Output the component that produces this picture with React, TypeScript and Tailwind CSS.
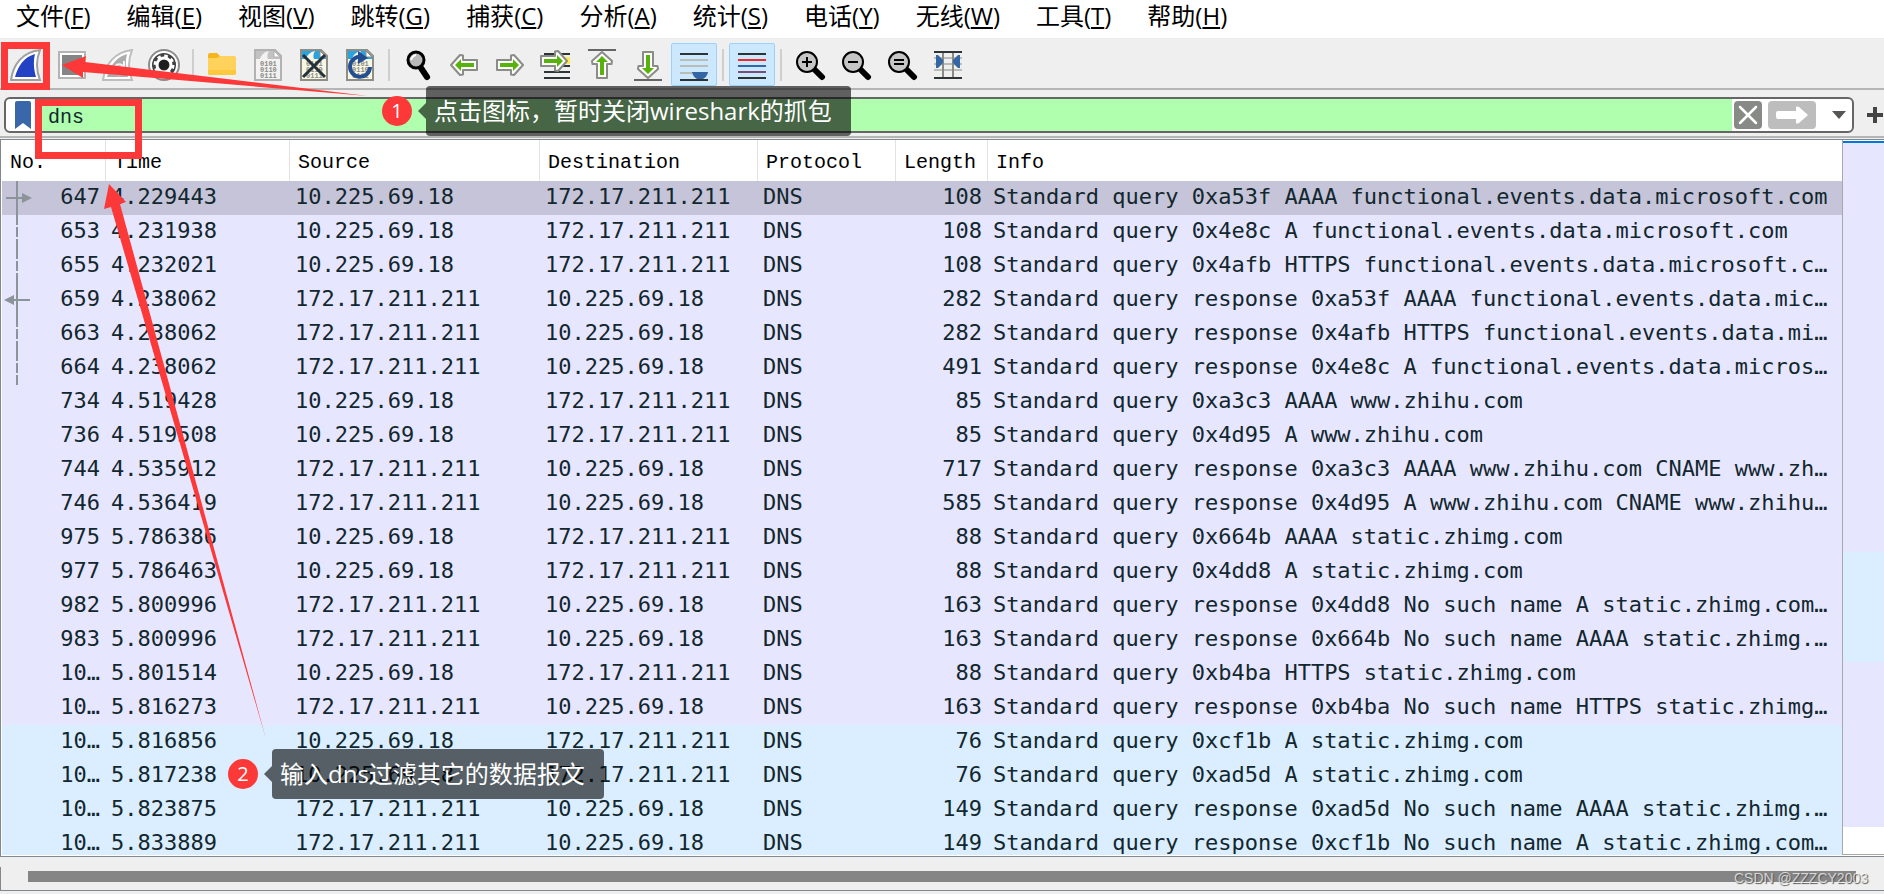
import React, { useState } from 'react';
import clsx from 'clsx';

interface Packet {
    no: string;
    time: string;
    out: boolean;
    length: number;
    info: string;
}

type Trace = 'request' | 'response' | 'dashed';

const CLIENT = '10.225.69.18';
const SERVER = '172.17.211.211';

const menus = [
    ['文件', 'F'], ['编辑', 'E'], ['视图', 'V'], ['跳转', 'G'], ['捕获', 'C'], ['分析', 'A'],
    ['统计', 'S'], ['电话', 'Y'], ['无线', 'W'], ['工具', 'T'], ['帮助', 'H'],
];

const packets: Packet[] = [
    { no: '647', time: '4.229443', out: true, length: 108, info: 'Standard query 0xa53f AAAA functional.events.data.microsoft.com' },
    { no: '653', time: '4.231938', out: true, length: 108, info: 'Standard query 0x4e8c A functional.events.data.microsoft.com' },
    { no: '655', time: '4.232021', out: true, length: 108, info: 'Standard query 0x4afb HTTPS functional.events.data.microsoft.c…' },
    { no: '659', time: '4.238062', out: false, length: 282, info: 'Standard query response 0xa53f AAAA functional.events.data.mic…' },
    { no: '663', time: '4.238062', out: false, length: 282, info: 'Standard query response 0x4afb HTTPS functional.events.data.mi…' },
    { no: '664', time: '4.238062', out: false, length: 491, info: 'Standard query response 0x4e8c A functional.events.data.micros…' },
    { no: '734', time: '4.519428', out: true, length: 85, info: 'Standard query 0xa3c3 AAAA www.zhihu.com' },
    { no: '736', time: '4.519508', out: true, length: 85, info: 'Standard query 0x4d95 A www.zhihu.com' },
    { no: '744', time: '4.535912', out: false, length: 717, info: 'Standard query response 0xa3c3 AAAA www.zhihu.com CNAME www.zh…' },
    { no: '746', time: '4.536419', out: false, length: 585, info: 'Standard query response 0x4d95 A www.zhihu.com CNAME www.zhihu…' },
    { no: '975', time: '5.786386', out: true, length: 88, info: 'Standard query 0x664b AAAA static.zhimg.com' },
    { no: '977', time: '5.786463', out: true, length: 88, info: 'Standard query 0x4dd8 A static.zhimg.com' },
    { no: '982', time: '5.800996', out: false, length: 163, info: 'Standard query response 0x4dd8 No such name A static.zhimg.com…' },
    { no: '983', time: '5.800996', out: false, length: 163, info: 'Standard query response 0x664b No such name AAAA static.zhimg.…' },
    { no: '10…', time: '5.801514', out: true, length: 88, info: 'Standard query 0xb4ba HTTPS static.zhimg.com' },
    { no: '10…', time: '5.816273', out: false, length: 163, info: 'Standard query response 0xb4ba No such name HTTPS static.zhimg…' },
    { no: '10…', time: '5.816856', out: true, length: 76, info: 'Standard query 0xcf1b A static.zhimg.com' },
    { no: '10…', time: '5.817238', out: true, length: 76, info: 'Standard query 0xad5d A static.zhimg.com' },
    { no: '10…', time: '5.823875', out: false, length: 149, info: 'Standard query response 0xad5d No such name AAAA static.zhimg.…' },
    { no: '10…', time: '5.833889', out: false, length: 149, info: 'Standard query response 0xcf1b No such name A static.zhimg.com…' },
];

const traces: Trace[] = ['request', 'dashed', 'dashed', 'response', 'dashed', 'dashed'];

const columns = ['No.', 'Time', 'Source', 'Destination', 'Protocol', 'Length', 'Info'];

const Icon = ({ children }: { children: React.ReactNode }) => (
    <svg width="32" height="32" viewBox="0 0 32 32" fill="none" aria-hidden="true">{children}</svg>
);

const ToolButton = ({ label, active, children }: { label: string; active?: boolean; children: React.ReactNode }) => (
    <button
        type="button"
        aria-label={label}
        className={clsx(
            'flex h-[43px] w-[46px] shrink-0 items-center justify-center rounded-xs border',
            active ? 'border-[#99d1ff] bg-[#cce8ff]' : 'border-transparent',
        )}
    >
        <Icon>{children}</Icon>
    </button>
);

const Separator = () => (
    <div className="flex w-3 shrink-0 justify-center">
        <div className="h-8 w-0.5 bg-[#cfcfcf]" />
    </div>
);

const Bits = ({ color }: { color: string }) => (
    <g fill={color} fontFamily="Liberation Mono, monospace" fontSize="7" fontWeight="700">
        <text x="8" y="17">0101</text>
        <text x="8" y="23">0110</text>
        <text x="8" y="29">0111</text>
    </g>
);

const FilePage = ({ color, paper, line }: { color: string; paper: string; line: string }) => (
    <>
        <path d="M3 1h20l6 6v24H3z" fill={paper} stroke={line} strokeWidth="2" />
        <path d="M4 2h18v6h6v2H4z" fill={color} />
        <path d="M8 10c1-4 4-7 9-8-2 3-2 6-1 8z" fill={paper} />
        <path d="M22 2v6h6z" fill="#fff" stroke={line} />
        <Bits color="#8b8b84" />
    </>
);

const Magnifier = ({ sign }: { sign?: string }) => (
    <>
        <path d="M21 21l7 7" stroke="#000" strokeWidth="6" strokeLinecap="round" />
        <circle cx="13" cy="13" r="10" fill="#c6c6c6" stroke="#000" strokeWidth="2" />
        {sign && <path d={sign} stroke="#000" strokeWidth="2" />}
    </>
);

const GreenArrow = ({ transform }: { transform?: string }) => (
    <g transform={transform}>
        <path d="M3 11h14V6.500l3-.5 9 10-9 10-3-.5V21H3z" fill="#fff" stroke="#8a8c88" strokeWidth="2" strokeLinejoin="round" />
        <path d="M6 14h13v-4l6 6-6 6v-4H6z" fill="#58b20c" />
    </g>
);

const Toolbar = () => (
    <div className="flex h-[51px] items-center overflow-hidden border-b-2 border-[#b5b5b5] bg-[#efefef] pt-0.5 pl-[3px]" role="toolbar">
        <ToolButton label="开始捕获分组">
            <path d="M1 31C3 16 12 3 30 1c-4 10-4 20 0 30z" fill="#fff" stroke="#a0a0a0" strokeWidth="2" />
            <path d="M5 28C8 17 14 8 25 5c-2 8-1 16 1 23z" fill="#2443c4" />
        </ToolButton>
        <ToolButton label="停止捕获分组">
            <path d="M3 3h26v26H3z" fill="#fff" stroke="#b4b4b4" strokeWidth="2" />
            <path d="M6 6h20v20H6z" fill="#858585" />
        </ToolButton>
        <ToolButton label="重新开始当前捕获">
            <path d="M1 31C3 16 12 3 30 1c-4 10-4 20 0 30z" fill="#fff" stroke="#bdbdbd" strokeWidth="2" />
            <path d="M5 28C8 17 14 8 25 5c-2 8-1 16 1 23z" fill="#adadad" />
            <path d="M21 17a5 5 0 1 0 1 5M22 12v6h-6" stroke="#f3f3f3" strokeWidth="2" />
        </ToolButton>
        <ToolButton label="捕获选项">
            <circle cx="16" cy="16" r="15" fill="#fff" stroke="#8b8b8b" strokeWidth="2" />
            <circle cx="16" cy="16" r="12" fill="#404040" />
            <circle cx="16" cy="16" r="7" stroke="#fff" strokeWidth="3" />
            <circle cx="16" cy="16" r="9" stroke="#fff" strokeWidth="3" strokeDasharray="3.500 3.570" />
            <circle cx="16" cy="16" r="5" fill="#1d1d1d" />
        </ToolButton>
        <Separator />
        <ToolButton label="打开">
            <path d="M2 6q0-2 2-2h7l3 3h14v8H2z" fill="#f5b51d" />
            <path d="M2 9h9l3-2h14q2 0 2 2v15q0 2-2 2H4q-2 0-2-2z" fill="#ffd35b" />
            <path d="M2 21h28v3q0 2-2 2H4q-2 0-2-2z" fill="#fdc83b" />
        </ToolButton>
        <ToolButton label="保存">
            <FilePage color="#c2c2c2" paper="#f2f2f2" line="#b2b2b2" />
        </ToolButton>
        <ToolButton label="关闭">
            <FilePage color="#2aa4de" paper="#f8f7e4" line="#8e8e86" />
            <path d="M5 6l22 22M27 6L5 28" stroke="#24303a" strokeWidth="3" />
        </ToolButton>
        <ToolButton label="重新加载">
            <FilePage color="#2aa4de" paper="#f8f7e4" line="#8e8e86" />
            <path d="M18 8a10 10 0 1 0 8 10" stroke="#234f92" strokeWidth="4" />
            <path d="M14 2l10 7-10 6z" fill="#234f92" />
        </ToolButton>
        <Separator />
        <ToolButton label="查找分组">
            <path d="M19 19l6 9" stroke="#000" strokeWidth="6" strokeLinecap="round" />
            <circle cx="14" cy="11" r="8" fill="#b9b9b9" stroke="#000" strokeWidth="3" />
            <path d="M9 11q1-4 5-5" stroke="#fff" strokeWidth="2" />
        </ToolButton>
        <ToolButton label="上一分组"><GreenArrow transform="rotate(180 16 16)" /></ToolButton>
        <ToolButton label="下一分组"><GreenArrow /></ToolButton>
        <ToolButton label="转到分组">
            <path d="M20 8h10v7H20z" fill="#fce94f" />
            <path d="M4 5h26M4 17h26M4 23h26M4 29h26" stroke="#2e3436" strokeWidth="2" />
            <GreenArrow transform="translate(-2 -4)" />
        </ToolButton>
        <ToolButton label="首个分组">
            <path d="M2 1h28" stroke="#666" strokeWidth="2" />
            <GreenArrow transform="rotate(-90 16 16)" />
        </ToolButton>
        <ToolButton label="最新分组">
            <path d="M2 31h28" stroke="#666" strokeWidth="2" />
            <GreenArrow transform="rotate(90 16 16)" />
        </ToolButton>
        <ToolButton label="自动滚动" active>
            <path d="M2 5h28M2 31h28" stroke="#2e3436" strokeWidth="2" />
            <path d="M2 11h28M2 17h28M2 24h28" stroke="#babdb6" strokeWidth="2" />
            <path d="M14 23h16q-1 5-5 7h-6q-4-2-5-7z" fill="#3465a4" />
        </ToolButton>
        <Separator />
        <ToolButton label="着色规则" active>
            <path d="M2 5h28M2 29h28" stroke="#2e3436" strokeWidth="2" />
            <path d="M2 11h28" stroke="#ef2929" strokeWidth="2" />
            <path d="M2 17h28" stroke="#3465a4" strokeWidth="2" />
            <path d="M2 23h28" stroke="#75507b" strokeWidth="2" />
        </ToolButton>
        <Separator />
        <ToolButton label="放大"><Magnifier sign="M8 13h10M13 8v10" /></ToolButton>
        <ToolButton label="缩小"><Magnifier sign="M8 13h10" /></ToolButton>
        <ToolButton label="原始大小"><Magnifier sign="M8 11h10M8 15h10" /></ToolButton>
        <ToolButton label="调整列宽">
            <path d="M2 9h28M2 15h28M2 21h28" stroke="#babdb6" strokeWidth="2" />
            <path d="M2 3h28M2 29h28" stroke="#2e3436" strokeWidth="2" />
            <path d="M11 4v24M21 4v24" stroke="#888a85" strokeWidth="2" />
            <path d="M4 6h2l5 5v3l-5 5H4zM28 6h-2l-5 5v3l5 5h2z" fill="#3465a4" />
        </ToolButton>
    </div>
);

const FilterBar = () => {
    const [filter, setFilter] = useState('dns');

    return (
        <div className="flex h-12 items-center border-b-2 border-[#b5b5b5] bg-[#efefef] pt-1 pl-1">
            <div className="flex h-9 flex-1 items-stretch overflow-hidden rounded-md border-2 border-[#666] bg-white">
                <button type="button" aria-label="书签" className="flex w-[30px] items-center justify-end pr-1">
                    <svg width="18" height="28" viewBox="0 0 18 28" aria-hidden="true">
                        <path d="M1 2q0-2 2-2h12q2 0 2 2v26l-8-6-8 6z" fill="#3868aa" />
                    </svg>
                </button>
                <input
                    type="text"
                    aria-label="显示过滤器"
                    value={filter}
                    onChange={(e) => setFilter(e.target.value)}
                    className="min-w-0 flex-1 bg-[#afffaf] pt-1.5 pl-3 font-['Liberation_Mono',monospace] text-xl text-[#12272e] outline-none"
                />
                <div className="flex items-center gap-1.5 pl-0.5">
                    <button type="button" aria-label="清除" className="flex size-7 items-center justify-center rounded-sm bg-[#888a85]" onClick={() => setFilter('')}>
                        <svg width="20" height="20" viewBox="0 0 20 20" aria-hidden="true">
                            <path d="M2 2l16 16M18 2L2 18" stroke="#fff" strokeWidth="2.500" strokeLinecap="round" />
                        </svg>
                    </button>
                    <button type="button" aria-label="应用" className="flex h-7 w-12 items-center justify-center rounded-sm bg-[#bdbdbd]">
                        <svg width="34" height="18" viewBox="0 0 34 18" aria-hidden="true">
                            <path d="M3 5h18V1q1-1 3 0l9 8-9 8q-2 1-3 0v-4H3q-2 0-2-2V7q0-2 2-2z" fill="#fff" />
                        </svg>
                    </button>
                    <button type="button" aria-label="历史" className="flex h-7 w-[30px] items-center justify-center pl-1">
                        <svg width="14" height="8" viewBox="0 0 14 8" aria-hidden="true">
                            <path d="M0 0h14L7 8z" fill="#555753" />
                        </svg>
                    </button>
                </div>
            </div>
            <button type="button" aria-label="添加" className="flex w-[30px] justify-end">
                <svg width="18" height="18" viewBox="0 0 18 18" aria-hidden="true">
                    <path d="M1 9h16M9 1v16" stroke="#444" strokeWidth="4" />
                </svg>
            </button>
        </div>
    );
};

const TraceMark = ({ kind }: { kind?: Trace }) => (
    <svg width="34" height="34" viewBox="0 0 34 34" aria-hidden="true" className="shrink-0">
        {kind === 'dashed' && <path d="M15 0v10M15 12v10M15 24v10" stroke="#8a9499" strokeWidth="2" />}
        {kind === 'request' && (
            <>
                <path d="M15 0v34M4 17h18" stroke="#8a9499" strokeWidth="2" />
                <path d="M20 12l10 5-10 5z" fill="#8a9499" />
            </>
        )}
        {kind === 'response' && (
            <>
                <path d="M15 0v34M10 17h18" stroke="#8a9499" strokeWidth="2" />
                <path d="M12 12L2 17l10 5z" fill="#8a9499" />
            </>
        )}
    </svg>
);

const PacketTable = () => (
    <table className="w-full table-fixed border-separate border-spacing-0 bg-white text-left whitespace-nowrap">
        <colgroup>
            <col className="w-[104px]" />
            <col className="w-[184px]" />
            <col className="w-[250px]" />
            <col className="w-[218px]" />
            <col className="w-[138px]" />
            <col className="w-[92px]" />
            <col />
        </colgroup>
        <thead>
            <tr className="h-[41px] text-xl text-black">
                {columns.map(name => (
                    <th key={name} scope="col" className="border-r border-[#e2e2e2] p-0 pt-1 pl-2 font-['Liberation_Mono',monospace] font-normal last:border-r-0">{name}</th>
                ))}
            </tr>
        </thead>
        <tbody className="text-[22px] leading-8 text-[#12272e]">
            {packets.map((p, i) => (
                <tr
                    key={i}
                    className={clsx('h-[34px]', i === 0 ? 'bg-[#c6c4d9]' : i < 16 ? 'bg-[#e7e6ff]' : 'bg-[#daeeff]')}
                >
                    <td className="p-0 pr-1.5">
                        <div className="flex h-[34px] justify-between">
                            <TraceMark kind={traces[i]} />
                            <span>{p.no}</span>
                        </div>
                    </td>
                    <td className="p-0 pb-0.5 pl-[5px]">{p.time}</td>
                    <td className="p-0 pb-0.5 pl-[5px]">{p.out ? CLIENT : SERVER}</td>
                    <td className="p-0 pb-0.5 pl-[5px]">{p.out ? SERVER : CLIENT}</td>
                    <td className="p-0 pb-0.5 pl-[5px]">DNS</td>
                    <td className="p-0 pr-1.5 pb-0.5 text-right">{p.length}</td>
                    <td className="overflow-hidden p-0 pb-0.5 pl-[5px]">{p.info}</td>
                </tr>
            ))}
        </tbody>
    </table>
);

const Minimap = () => (
    <div className="flex w-[42px] shrink-0 flex-col border-b border-l border-[#a8a8a8] bg-white">
        <div className="mt-px h-0.5 bg-[#0078d7]" />
        <div className="grow-[409] bg-[#e7e6ff]" />
        <div className="grow-[110] bg-[#daeeff]" />
        <div className="grow-[165] bg-[#e7e6ff]" />
        <div className="grow-[27] bg-white" />
    </div>
);

const Callout = ({ step, text }: { step: number; text: string }) => (
    <div className="flex items-center">
        <span className="flex size-[30px] items-center justify-center rounded-full bg-[#fc3838] text-xl text-white">{step}</span>
        <svg width="14" height="16" viewBox="0 0 14 16" aria-hidden="true">
            <path d="M14 0v16L6 8z" fill="#000" fillOpacity="0.6" />
        </svg>
        <span className="flex h-[50px] items-center rounded-sm bg-black/60 pr-[19px] pl-2 text-2xl whitespace-nowrap text-white">{text}</span>
    </div>
);

// Tutorial marks drawn over the window
const Annotations = () => (
    <div className="pointer-events-none absolute inset-0 overflow-hidden">
        <svg width="640" height="800" viewBox="0 0 640 800" className="absolute top-0 left-0" aria-hidden="true">
            <rect x="4.500" y="45.500" width="42" height="41" fill="none" stroke="#fc3838" strokeWidth="7" />
            <rect x="38.500" y="102.500" width="100" height="53" fill="none" stroke="#fc3838" strokeWidth="7" />
            <path d="M62 65l24-9-1 6 283 34-285-24v6z" fill="#fc3838" />
            <path d="M109 184l17 18-6 2 146 535L111 207l-7 2z" fill="#fc3838" />
        </svg>
        <div className="absolute top-[86px] left-[382px]">
            <Callout step={1} text="点击图标，暂时关闭wireshark的抓包" />
        </div>
        <div className="absolute top-[749px] left-[228px]">
            <Callout step={2} text="输入dns过滤其它的数据报文" />
        </div>
    </div>
);

const App = () => (
    <div className="relative flex h-screen flex-col overflow-hidden bg-[#efefef] font-['Open_Sans','Noto_Sans_CJK_SC',sans-serif]">
        <nav className="flex h-[39px] shrink-0 items-start gap-9 overflow-hidden border-b border-[#ececec] bg-white pl-4 text-2xl leading-8 whitespace-nowrap text-black">
            {menus.map(([name, key]) => (
                <button type="button" key={key}>{name}(<span className="underline underline-offset-2">{key}</span>)</button>
            ))}
        </nav>
        <div className="shrink-0">
            <Toolbar />
            <FilterBar />
        </div>
        <main className="mt-px flex min-h-0 flex-1 border-t border-l border-[#828790] bg-white pb-px pl-px">
            <div className="min-w-0 flex-1 overflow-hidden font-['DejaVu_Sans_Mono','Noto_Sans_CJK_SC',monospace]">
                <PacketTable />
            </div>
            <Minimap />
        </main>
        <footer className="shrink-0 border-t border-[#828790] pt-2.5 pb-[3px]">
            <div className="flex h-6 items-start border-b border-l border-[#828790] pt-1 pr-7 pl-[27px]">
                <div className="h-[11px] flex-1 bg-[#858585]" />
            </div>
        </footer>
        <div className="absolute right-4 bottom-1.5 font-['Liberation_Sans',sans-serif] text-sm text-white/70 [text-shadow:1px_1px_1px_#555]">CSDN @ZZZCY2003</div>
        <Annotations />
    </div>
);

export default App;
